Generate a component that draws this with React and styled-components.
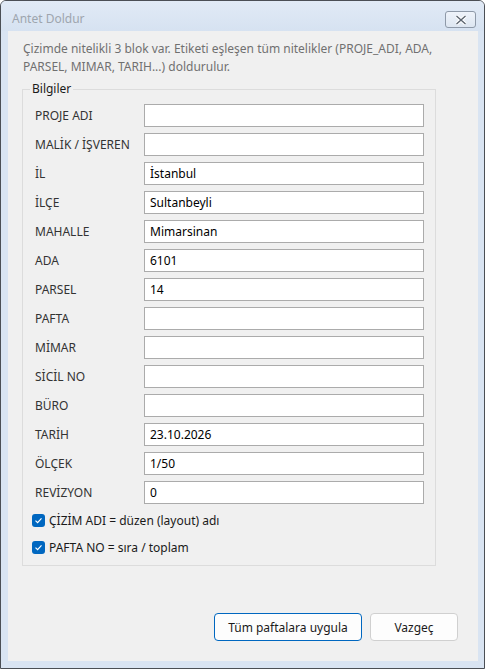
import React from "react"
import styled, { createGlobalStyle } from "styled-components"

const GlobalStyle = createGlobalStyle`
  html, body {
    margin: 0;
    padding: 0;
    background: #ffffff;
  }
  * {
    box-sizing: border-box;
  }
`

const Window = styled.div`
  width: 485px;
  height: 669px;
  border: 1px solid #4b4f55;
  border-radius: 6px 6px 0 0;
  background: #d9e4f2;
  display: flex;
  flex-direction: column;
  font-family: "Noto Sans", "Open Sans", sans-serif;
  font-size: 12px;
  overflow: hidden;
`

const TitleBar = styled.div`
  height: 30px;
  flex: none;
  display: flex;
  justify-content: space-between;
  padding-left: 11px;
  background: linear-gradient(#e1eaf6, #d6e2f1);
`

const Title = styled.div`
  color: #9ea5ae;
  font-size: 12px;
  line-height: 36px;
`

const CloseButton = styled.button`
  width: 31px;
  height: 17px;
  margin: 10px 8px 0 0;
  padding: 0;
  border: 1px solid #8e99a8;
  border-radius: 3px;
  background: linear-gradient(#eef3fa, #dde6f1);
  display: flex;
  align-items: center;
  justify-content: center;
`

const Client = styled.div`
  flex: 1;
  margin: 0 6px 7px 7px;
  background: #f0f0f0;
  display: flex;
  flex-direction: column;
`

const Intro = styled.p`
  margin: 9px 40px 0 15px;
  color: #707070;
  line-height: 18px;
`

const Group = styled.fieldset`
  margin: 5px 42px 0 14px;
  padding: 7px 11px 8px 12px;
  border: 1px solid #dcdcdc;
  border-radius: 0;
`

const Legend = styled.legend`
  margin-left: -5px;
  padding: 0 2px 0 2px;
  color: #1a1a1a;
  line-height: 16px;
`

const Fields = styled.div`
  display: grid;
  grid-template-columns: 109px 1fr;
  grid-auto-rows: 23px;
  row-gap: 6px;
  align-items: center;
`

const Label = styled.label`
  color: #333333;
  line-height: 23px;
`

const Input = styled.input`
  height: 23px;
  width: 100%;
  margin: 0;
  padding: 0 5px;
  border: 1px solid #ababab;
  background: #ffffff;
  font-family: inherit;
  font-size: 12px;
  color: #000;
  outline: none;
`

const Checks = styled.div`
  margin-top: 6px;
  display: flex;
  flex-direction: column;
  gap: 7px;
`

const CheckRow = styled.label`
  height: 20px;
  display: flex;
  align-items: center;
  gap: 4px;
  margin-left: -3px;
  color: #1a1a1a;
`

const Box = styled.span`
  width: 13px;
  height: 13px;
  border-radius: 3px;
  background: #0067c0;
  display: flex;
  align-items: center;
  justify-content: center;
`

const Footer = styled.div`
  margin-top: auto;
  padding: 0 20px 20px 0;
  display: flex;
  justify-content: flex-end;
  gap: 8px;
`

const Button = styled.button`
  width: ${p => p.$w}px;
  height: 28px;
  border: 1px solid ${p => (p.$primary ? "#0067c0" : "#d0d0d0")};
  border-radius: 4px;
  background: #fdfdfd;
  color: #1a1a1a;
  font-family: inherit;
  font-size: 12px;
  padding: 0;
`

const fields = [
  ["PROJE ADI", ""],
  ["MALİK / İŞVEREN", ""],
  ["İL", "İstanbul"],
  ["İLÇE", "Sultanbeyli"],
  ["MAHALLE", "Mimarsinan"],
  ["ADA", "6101"],
  ["PARSEL", "14"],
  ["PAFTA", ""],
  ["MİMAR", ""],
  ["SİCİL NO", ""],
  ["BÜRO", ""],
  ["TARİH", "23.10.2026"],
  ["ÖLÇEK", "1/50"],
  ["REVİZYON", "0"],
]

const Check = ({ children }) => (
  <CheckRow>
    <Box>
      <svg width="9" height="9" viewBox="0 0 9 9">
        <path d="M1.5 4.6 L3.6 6.6 L7.5 2.4" fill="none" stroke="#fff" strokeWidth="1.2" />
      </svg>
    </Box>
    {children}
  </CheckRow>
)

const App = () => (
  <>
    <GlobalStyle />
    <Window>
      <TitleBar>
        <Title>Antet Doldur</Title>
        <CloseButton>
          <svg width="14" height="10" viewBox="0 0 14 10">
            <path d="M2.5 1 L11.5 9 M11.5 1 L2.5 9" stroke="#ffffff" strokeWidth="3.4" />
            <path d="M2.5 1 L11.5 9 M11.5 1 L2.5 9" stroke="#5c6570" strokeWidth="1.4" />
          </svg>
        </CloseButton>
      </TitleBar>
      <Client>
        <Intro>
          Çizimde nitelikli 3 blok var. Etiketi eşleşen tüm nitelikler (PROJE_ADI, ADA,
          PARSEL, MIMAR, TARIH...) doldurulur.
        </Intro>
        <Group>
          <Legend>Bilgiler</Legend>
          <Fields>
            {fields.map(([label, value]) => (
              <React.Fragment key={label}>
                <Label>{label}</Label>
                <Input defaultValue={value} />
              </React.Fragment>
            ))}
          </Fields>
          <Checks>
            <Check>ÇİZİM ADI = düzen (layout) adı</Check>
            <Check>PAFTA NO = sıra / toplam</Check>
          </Checks>
        </Group>
        <Footer>
          <Button $primary $w={148}>Tüm paftalara uygula</Button>
          <Button $w={88}>Vazgeç</Button>
        </Footer>
      </Client>
    </Window>
  </>
)

export default App
